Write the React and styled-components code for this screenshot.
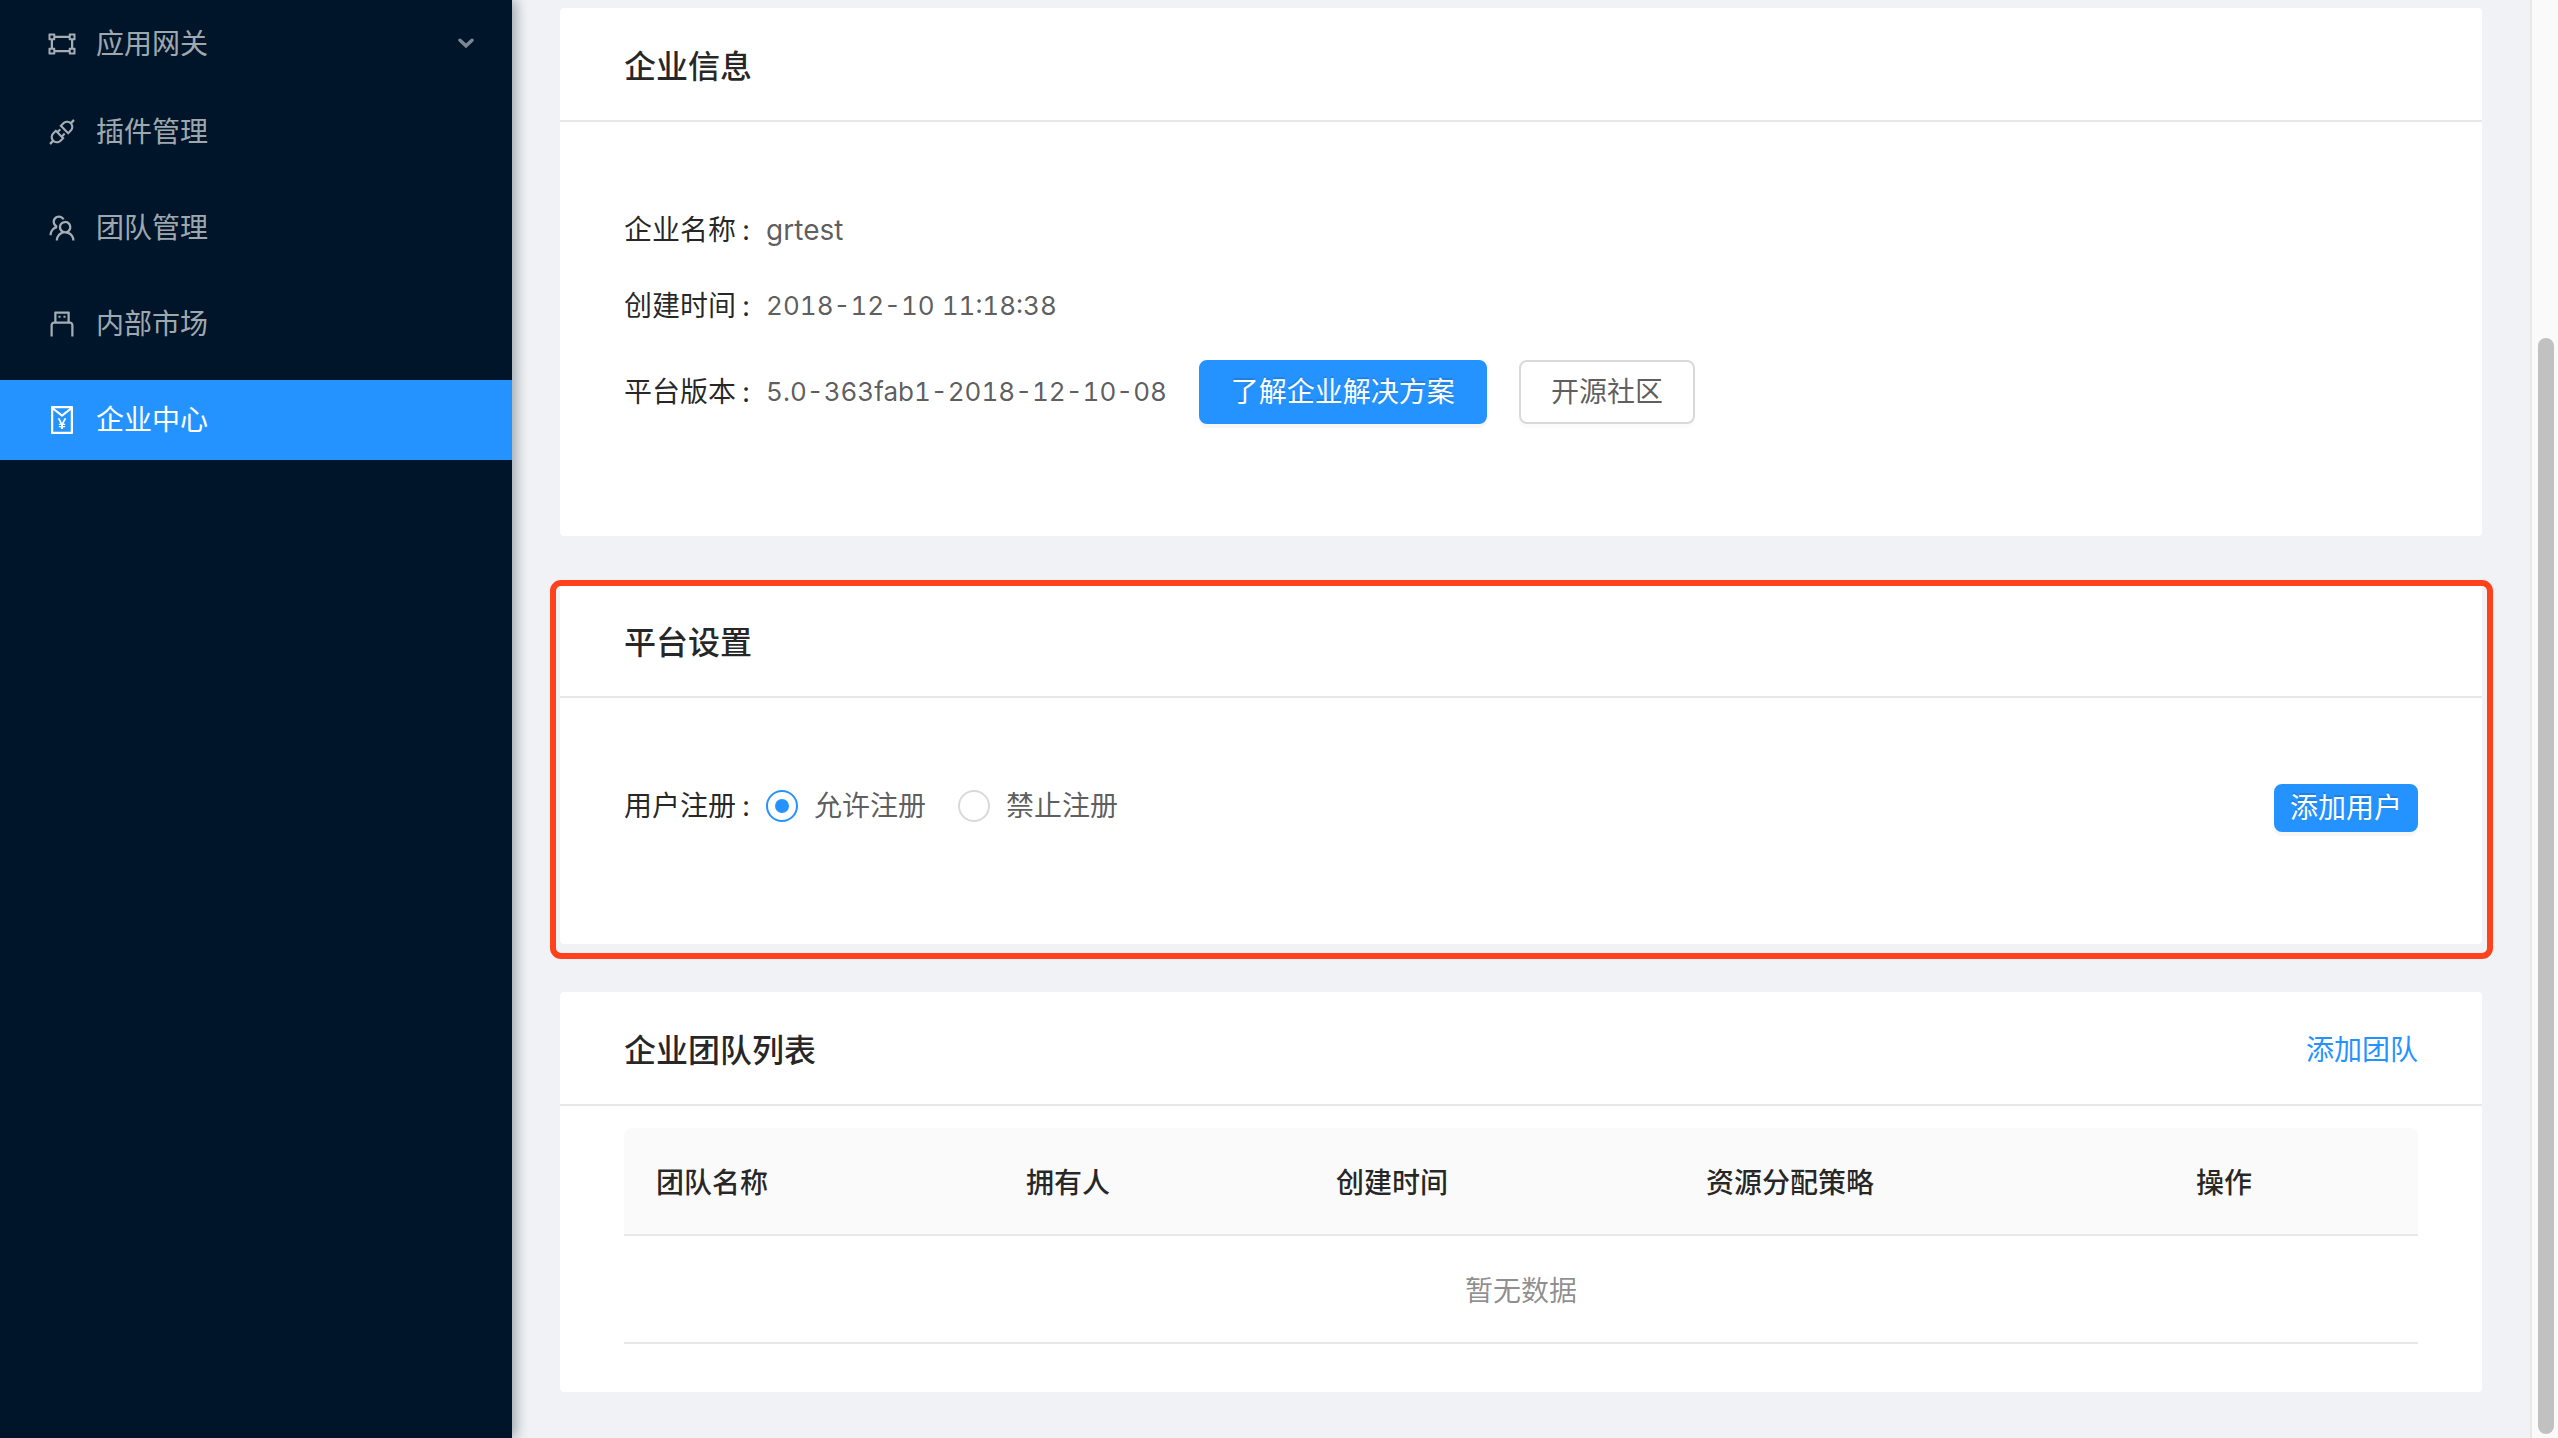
import { useState } from 'react';
import styled, { createGlobalStyle } from 'styled-components';
import {
  AiOutlineApi,
  AiOutlineGateway,
  AiOutlineRedEnvelope,
  AiOutlineTeam,
  AiOutlineUsb,
} from 'react-icons/ai';

const menuItems = [
  { key: 'gateway', label: '应用网关', icon: AiOutlineGateway, submenu: true },
  { key: 'plugin', label: '插件管理', icon: AiOutlineApi },
  { key: 'team', label: '团队管理', icon: AiOutlineTeam },
  { key: 'market', label: '内部市场', icon: AiOutlineUsb },
  { key: 'enterprise', label: '企业中心', icon: AiOutlineRedEnvelope },
];

const columns = [
  { title: '团队名称', width: 370 },
  { title: '拥有人', width: 310 },
  { title: '创建时间', width: 370 },
  { title: '资源分配策略', width: 490 },
  { title: '操作', width: 254 },
];

const registerOptions = [
  { value: 'allow', label: '允许注册' },
  { value: 'forbid', label: '禁止注册' },
];

const cjkFont = "'Noto Sans CJK SC', sans-serif";

const App = () => {
  const [active, setActive] = useState('enterprise');
  const [register, setRegister] = useState('allow');

  return (
    <>
      <GlobalStyle />
      <Layout>
        <Sider>
          {menuItems.map(({ key, label, icon: Icon, submenu }) => (
            <MenuItem
              key={key}
              href={`#${key}`}
              $active={active === key}
              $submenu={submenu}
              onClick={() => setActive(key)}
            >
              <Icon size={32} />
              <MenuLabel>{label}</MenuLabel>
              {submenu && (
                <Arrow viewBox='0 0 16 12'>
                  <path d='M2 2.2L8 7.8L14 2.2' />
                </Arrow>
              )}
            </MenuItem>
          ))}
        </Sider>

        <Content>
          <Card>
            <CardHead>
              <CardTitle>企业信息</CardTitle>
            </CardHead>
            <InfoBody>
              <InfoRow>
                <Term>企业名称</Term>
                <Detail>grtest</Detail>
              </InfoRow>
              <InfoRow>
                <Term>创建时间</Term>
                <Detail $numeric>2018-12-10 11:18:38</Detail>
              </InfoRow>
              <InfoRow>
                <Term>平台版本</Term>
                <Detail $numeric>5.0-363fab1-2018-12-10-08</Detail>
                <Actions>
                  <Button $primary>了解企业解决方案</Button>
                  <Button>开源社区</Button>
                </Actions>
              </InfoRow>
            </InfoBody>
          </Card>

          <Card>
            <CardHead>
              <CardTitle>平台设置</CardTitle>
            </CardHead>
            <SettingBody>
              <RadioGroup role='radiogroup' aria-labelledby='register-label'>
                <Term as='span' id='register-label'>
                  用户注册
                </Term>
                {registerOptions.map(({ value, label }) => (
                  <RadioLabel key={value}>
                    <Radio
                      type='radio'
                      name='register'
                      value={value}
                      checked={register === value}
                      onChange={(e) => setRegister(e.target.value)}
                    />
                    {label}
                  </RadioLabel>
                ))}
              </RadioGroup>
              <Button $primary $small>
                添加用户
              </Button>
            </SettingBody>
            <Highlight />
          </Card>

          <Card>
            <CardHead>
              <CardTitle>企业团队列表</CardTitle>
              <CardLink href='#add-team'>添加团队</CardLink>
            </CardHead>
            <TableBody>
              <Table>
                <colgroup>
                  {columns.map(({ title, width }) => (
                    <Col key={title} $width={width} />
                  ))}
                </colgroup>
                <thead>
                  <tr>
                    {columns.map(({ title }) => (
                      <Th key={title}>{title}</Th>
                    ))}
                  </tr>
                </thead>
                <tbody>
                  <tr>
                    <Empty colSpan={columns.length}>暂无数据</Empty>
                  </tr>
                </tbody>
              </Table>
            </TableBody>
          </Card>
        </Content>

        <ScrollTrack>
          <ScrollThumb />
        </ScrollTrack>
      </Layout>
    </>
  );
};
export default App;

const GlobalStyle = createGlobalStyle`
  *,
  *::before,
  *::after {
    box-sizing: border-box;
  }
  body {
    margin: 0;
    background: #f0f2f5;
    color: rgba(0, 0, 0, 0.65);
    font-family: Inter, 'Noto Sans CJK SC', sans-serif;
    font-size: 28px;
    line-height: 44px;
  }
  a {
    text-decoration: none;
  }
`;

const Layout = styled.div`
  display: flex;
  min-height: 100vh;
`;

// Sidebar
const Sider = styled.nav`
  z-index: 1;
  display: flex;
  flex-direction: column;
  flex: 0 0 512px;
  gap: 16px;
  padding-top: 4px;
  background: #001529;
  box-shadow: 4px 0 12px rgba(0, 21, 41, 0.35);
`;

const MenuItem = styled.a`
  display: flex;
  align-items: center;
  gap: 18px;
  height: 80px;
  margin-bottom: ${({ $submenu }) => ($submenu ? '-8px' : '0')};
  padding: 0 38px 0 46px;
  background: ${({ $active }) => ($active ? '#2593ff' : 'transparent')};
  color: ${({ $active }) => ($active ? '#fff' : 'rgba(255, 255, 255, 0.65)')};
`;

const MenuLabel = styled.span`
  flex: 1;
`;

const Arrow = styled.svg`
  width: 16px;
  height: 12px;
  fill: none;
  stroke: currentColor;
  stroke-width: 3.4;
  stroke-linecap: round;
  opacity: 0.75;
`;

// Cards
const Content = styled.main`
  display: flex;
  flex: 1;
  flex-direction: column;
  gap: 48px;
  min-width: 0;
  padding: 8px 48px 46px;
`;

const Card = styled.section`
  position: relative;
  border-radius: 4px;
  background: #fff;
`;

const CardHead = styled.header`
  display: flex;
  align-items: center;
  justify-content: space-between;
  padding: 32px 64px;
  border-bottom: 2px solid #e8e8e8;
  font-family: ${cjkFont};
`;

const CardTitle = styled.h2`
  margin: 0;
  color: rgba(0, 0, 0, 0.85);
  font-size: 32px;
  font-weight: 500;
  line-height: 48px;
`;

const CardLink = styled.a`
  color: #2593ff;
`;

const InfoBody = styled.dl`
  display: flex;
  flex-direction: column;
  gap: 32px;
  margin: 0;
  padding: 86px 64px 112px;
`;

const InfoRow = styled.div`
  display: flex;
  align-items: center;
`;

const Term = styled.dt`
  color: rgba(0, 0, 0, 0.85);
  &::after {
    content: ':';
    margin: 0 16px 0 6px;
  }
`;

const Detail = styled.dd`
  margin: 0;
  font-size: ${({ $numeric }) => ($numeric ? '26px' : '28px')};
  font-variant-numeric: ${({ $numeric }) =>
    $numeric ? 'tabular-nums' : 'normal'};
`;

const Actions = styled.dd`
  display: flex;
  gap: 32px;
  margin: 0 0 0 32px;
`;

const Button = styled.button`
  height: ${({ $small }) => ($small ? '48px' : '64px')};
  padding: 0 ${({ $small }) => ($small ? '14px' : '30px')};
  border: 2px solid ${({ $primary }) => ($primary ? '#2593ff' : '#d9d9d9')};
  border-radius: 8px;
  background: ${({ $primary }) => ($primary ? '#2593ff' : '#fff')};
  box-shadow: 0 4px 0
    ${({ $primary }) =>
      $primary ? 'rgba(0, 0, 0, 0.035)' : 'rgba(0, 0, 0, 0.015)'};
  color: ${({ $primary }) => ($primary ? '#fff' : 'rgba(0, 0, 0, 0.65)')};
  font: inherit;
  line-height: 42px;
  text-shadow: ${({ $primary }) =>
    $primary ? '0 -2px 0 rgba(0, 0, 0, 0.12)' : 'none'};
  cursor: pointer;
`;

// Platform settings
const SettingBody = styled.div`
  display: flex;
  align-items: flex-start;
  justify-content: space-between;
  padding: 86px 64px 112px;
`;

const RadioGroup = styled.div`
  display: flex;
`;

const RadioLabel = styled.label`
  display: flex;
  align-items: center;
  gap: 16px;
  margin-right: 32px;
  cursor: pointer;
`;

const Radio = styled.input`
  display: grid;
  place-items: center;
  width: 32px;
  height: 32px;
  margin: 0;
  border: 2px solid #d9d9d9;
  border-radius: 50%;
  background: #fff;
  appearance: none;
  &:checked {
    border-color: #2593ff;
  }
  &:checked::after {
    content: '';
    width: 14px;
    height: 14px;
    border-radius: 50%;
    background: #2593ff;
  }
`;

const Highlight = styled.div`
  position: absolute;
  inset: -4px -11px -15px -10px;
  border: 6px solid #ff421c;
  border-radius: 11px;
  pointer-events: none;
`;

// Team table
const TableBody = styled.div`
  padding: 22px 64px 48px;
`;

const Table = styled.table`
  width: 100%;
  border-collapse: separate;
  border-spacing: 0;
  table-layout: fixed;
  font-family: ${cjkFont};
  line-height: 42px;
`;

const Col = styled.col`
  width: ${({ $width }) => ($width / 1794) * 100}%;
`;

const Th = styled.th`
  padding: 32px;
  border-bottom: 2px solid #e8e8e8;
  background: #fafafa;
  color: rgba(0, 0, 0, 0.85);
  font-weight: 500;
  text-align: left;
  &:first-child {
    border-top-left-radius: 8px;
  }
  &:last-child {
    border-top-right-radius: 8px;
  }
`;

const Empty = styled.td`
  padding: 32px;
  border-bottom: 2px solid #e8e8e8;
  color: rgba(0, 0, 0, 0.45);
  text-align: center;
`;

// Scrollbar
const ScrollTrack = styled.div`
  display: flex;
  align-items: flex-end;
  flex: 0 0 28px;
  height: 100vh;
  padding: 4px 4px 4px 6px;
  border-left: 2px solid #e8e8e8;
  background: #fafafa;
`;

const ScrollThumb = styled.div`
  flex: 1;
  height: calc(100% - 334px);
  border-radius: 8px;
  background: #c1c1c1;
`;
